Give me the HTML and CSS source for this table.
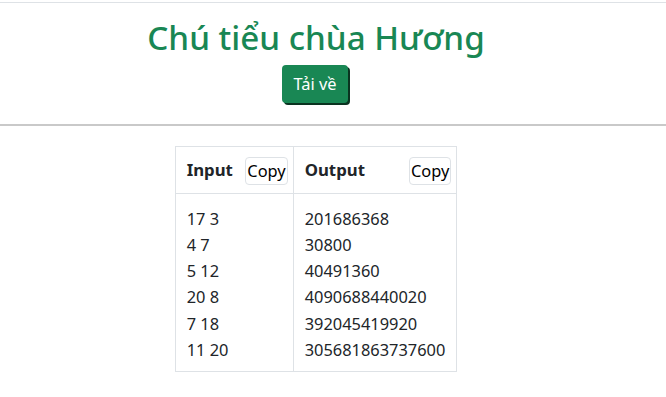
FILE: index.html
```html
<!DOCTYPE html>
<html lang="vi">
<head>
<meta charset="utf-8">
<title>Chú tiểu chùa Hương</title>
<link rel="stylesheet" href="styles.css">
</head>
<body>
<div class="topline"></div>
<header class="hero">
  <h1 class="title">Chú tiểu chùa Hương</h1>
  <button class="btn-dl" type="button">Tải về</button>
</header>
<hr class="divider">
<main class="content">
  <table class="io">
    <thead>
      <tr>
        <th class="col-in"><div class="th-inner"><span>Input</span><button class="copy" type="button">Copy</button></div></th>
        <th class="col-out"><div class="th-inner"><span>Output</span><button class="copy" type="button">Copy</button></div></th>
      </tr>
    </thead>
    <tbody>
      <tr>
        <td><div class="lines"><div>17 3</div><div>4 7</div><div>5 12</div><div>20 8</div><div>7 18</div><div>11 20</div></div></td>
        <td><div class="lines"><div>201686368</div><div>30800</div><div>40491360</div><div>4090688440020</div><div>392045419920</div><div>305681863737600</div></div></td>
      </tr>
    </tbody>
  </table>
</main>
</body>
</html>
```
FILE: styles.css
```css
html, body {
  margin: 0;
  padding: 0;
  background: #fff;
}
body {
  font-family: "Noto Sans", "Open Sans", sans-serif;
  color: #212529;
  font-size: 16.4px;
}
.topline {
  margin-top: 2px;
  height: 1px;
  background: #dee2e6;
}
.hero {
  width: 632px;
  display: flex;
  flex-direction: column;
  align-items: center;
}
.title {
  margin: 15px 0 7px;
  font-size: 33.2px;
  line-height: 1.2;
  font-weight: 500;
  color: #198754;
}
.btn-dl {
  width: 66px;
  height: 38px;
  margin-left: -2px;
  padding: 0;
  border: none;
  border-radius: 4px;
  background: #198754;
  color: #fff;
  font-family: inherit;
  font-size: 16.4px;
  box-shadow: 2px 2px 0 #0a3320;
}
.divider {
  margin: 21px 0 0;
  border: none;
  height: 2px;
  background: #c9c9c9;
}
.content {
  width: 632px;
  display: flex;
  justify-content: center;
  padding-top: 20px;
}
.io {
  border-collapse: collapse;
}
.io th, .io td {
  border: 1px solid #dee2e6;
  padding: 0;
  text-align: left;
  vertical-align: top;
}
.col-in { width: 117px; }
.col-out { width: 159px; }
.th-inner {
  height: 46px;
  display: flex;
  align-items: center;
  justify-content: space-between;
  padding: 0 5px 0 11px;
  font-weight: 700;
  font-size: 16.8px;
}
.copy {
  height: 28px;
  padding: 0 1px;
  border: 1px solid #dee2e6;
  border-radius: 4px;
  background: #fff;
  color: #000;
  font-family: inherit;
  font-size: 16.4px;
  font-weight: 400;
  margin-top: 2px;
}
.lines {
  padding: 12px 11px 8px;
  line-height: 26.2px;
}
```
